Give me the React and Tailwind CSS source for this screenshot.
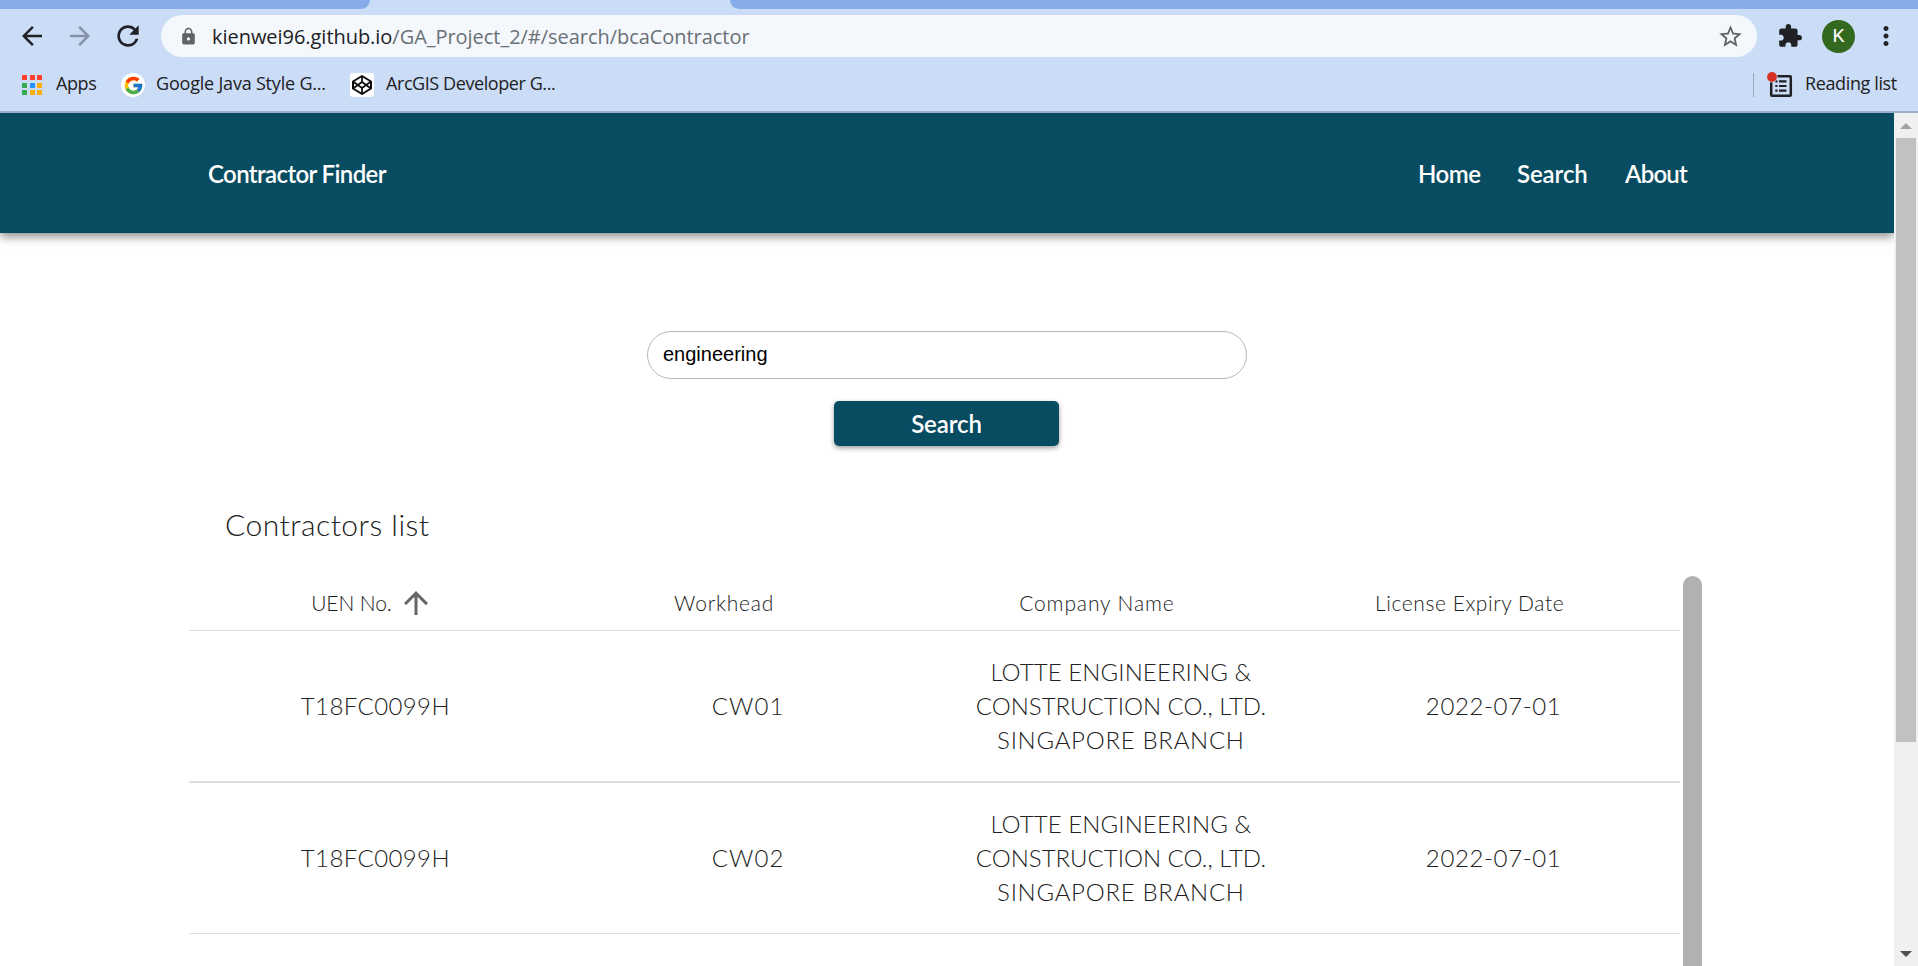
import {
  MdArrowBack,
  MdArrowForward,
  MdArrowUpward,
  MdExtension,
  MdLock,
  MdMoreVert,
  MdRefresh,
  MdStarBorder,
} from "react-icons/md";
import { FcGoogle } from "react-icons/fc";

const APP_TILES = [
  "bg-[#ff4031]", "bg-[#ff4031]", "bg-[#ff4031]",
  "bg-[#34a853]", "bg-[#2492ff]", "bg-[#ffaf0a]",
  "bg-[#34a853]", "bg-[#ffaf0a]", "bg-[#ffaf0a]",
];

const CONTRACTORS = [
  { uen: "T18FC0099H", workhead: "CW01", expiry: "2022-07-01" },
  { uen: "T18FC0099H", workhead: "CW02", expiry: "2022-07-01" },
];

function TabStrip() {
  return (
    <div className="flex h-[9px] bg-[#cbdcf6]">
      <div className="w-[370px] rounded-br-[9px] bg-[#86ace9]" />
      <div className="w-[360px]" />
      <div className="flex-1 rounded-bl-[9px] bg-[#86ace9]" />
    </div>
  );
}

function Toolbar() {
  return (
    <div className="flex h-[54px] items-center text-[#202124]">
      <MdArrowBack size={30} className="ml-[17px] shrink-0" />
      <MdArrowForward size={30} className="ml-[18px] shrink-0 text-[#8490a5]" />
      <MdRefresh size={32} className="ml-[17px] shrink-0" />
      <div className="ml-[17px] flex h-[42px] w-[1596px] items-center rounded-full bg-[#f4f8fd] pr-[13px] pl-[18px]">
        <MdLock size={19} className="text-[#5f6368]" />
        <div className="ml-[14px] flex-1 pt-[2px] text-[20px] leading-[40px] tracking-[-0.04px] whitespace-nowrap">
          kienwei96.github.io
          <span className="text-[#6b7075]">/GA_Project_2/#/search/bcaContractor</span>
        </div>
        <MdStarBorder size={27} className="text-[#5f6368]" />
      </div>
      <MdExtension size={26} className="ml-[20px] shrink-0" />
      <div className="ml-[19px] flex size-[33px] items-center justify-center rounded-full bg-[#33691e] font-[Roboto] text-[19px] text-white">
        K
      </div>
      <MdMoreVert size={30} className="ml-[16px] shrink-0" />
    </div>
  );
}

function CodePenIcon() {
  return (
    <svg viewBox="0 0 24 24" className="size-6" fill="none" stroke="#0b0b0b" strokeWidth="2" strokeLinejoin="round">
      <path d="M12 3 21 8.500v7L12 21 3 15.500v-7Z" />
      <path d="M12 3v5.500M12 15.500V21M3 8.500 12 15 21 8.500M3 15.500 12 9 21 15.500" strokeWidth="1.700" />
    </svg>
  );
}

function ReadingListIcon() {
  return (
    <svg viewBox="0 0 26 26" className="size-[26px]">
      <rect x="4.200" y="4.200" width="19.600" height="19.600" rx="0.800" fill="none" stroke="#202124" strokeWidth="2.500" />
      <path
        d="M8.300 9.300h2.200M12 9.300h7.500M8.300 14h2.200M12 14h7.500M8.300 18.700h2.200M12 18.700h7.500"
        stroke="#202124"
        strokeWidth="2.200"
      />
      <circle cx="5" cy="5" r="5.600" fill="#cbdcf6" />
      <circle cx="5" cy="5" r="4.900" fill="#d93025" />
    </svg>
  );
}

function BookmarksBar() {
  return (
    <div className="flex h-12 items-center border-b-2 border-[#a0aecb] pb-1.5 text-[18px] leading-6 whitespace-nowrap text-[#202124]">
      <div className="ml-[22px] grid grid-cols-3 gap-[2.5px]">
        {APP_TILES.map((color, i) => (
          <span key={i} className={`size-[5px] ${color}`} />
        ))}
      </div>
      <span className="ml-[14px] w-[65px] pb-[4px] tracking-[-0.4px]">Apps</span>
      <span className="flex size-6 items-center justify-center rounded-full bg-white">
        <FcGoogle size={21} />
      </span>
      <span className="ml-[11px] w-[194px] pb-[4px] tracking-[-0.2px]">Google Java Style G...</span>
      <span className="flex size-6 rounded-[3px] bg-white">
        <CodePenIcon />
      </span>
      <span className="ml-[12px] pb-[4px] tracking-[-0.42px]">ArcGIS Developer G...</span>
      <span className="ml-auto h-6 w-px bg-[#9aa8c0]" />
      <span className="ml-[13px]">
        <ReadingListIcon />
      </span>
      <span className="ml-[12px] w-[113px] pb-[4px] tracking-[-0.38px]">Reading list</span>
    </div>
  );
}

function SiteHeader() {
  return (
    <header className="relative flex h-[120px] shrink-0 items-center justify-between bg-[#084c61] pt-[2px] pr-[205px] pl-[208px] text-[24px] font-semibold text-white shadow-[0_3px_10px_rgba(0,0,0,0.5)]">
      <span className="tracking-[-0.62px]">Contractor Finder</span>
      <nav className="flex">
        <a className="w-[99px] tracking-[-0.5px]">Home</a>
        <a className="w-[108px] tracking-[-0.1px]">Search</a>
        <a className="w-[64px] tracking-[-0.8px]">About</a>
      </nav>
    </header>
  );
}

function SearchForm() {
  return (
    <form className="mt-[98px] flex flex-col items-center">
      <div className="flex h-12 w-[600px] items-center rounded-full border border-[#b9b9b9] pb-[2px] pl-[15px] font-['Liberation_Sans',sans-serif] text-[20px] text-black">
        engineering
      </div>
      <button
        type="button"
        className="mt-[22px] mr-px h-[45px] w-[225px] rounded-[5px] bg-[#084c61] text-[24px] font-semibold tracking-[-0.1px] text-white shadow-[0_2px_5px_rgba(0,0,0,0.4)]"
      >
        Search
      </button>
    </form>
  );
}

function HeaderCell({ children, sorted = false }) {
  return (
    <div className="flex items-center justify-center">
      {children}
      <span className="ml-[6px] flex w-[42px] justify-start">
        {sorted && <MdArrowUpward size={36} className="text-[#666666]" />}
      </span>
    </div>
  );
}

function ContractorTable() {
  return (
    <div className="w-[1491px] font-light text-[#212121]">
      <div className="grid h-[55px] grid-cols-4 border-b border-[#dcdcdc] text-[21px]">
        <HeaderCell sorted>
          <span className="tracking-[-0.1px]">UEN No.</span>
        </HeaderCell>
        <HeaderCell>
          <span className="tracking-[0.8px]">Workhead</span>
        </HeaderCell>
        <HeaderCell>
          <span className="tracking-[0.88px]">Company Name</span>
        </HeaderCell>
        <HeaderCell>
          <span className="tracking-[0.57px]">License Expiry Date</span>
        </HeaderCell>
      </div>
      {CONTRACTORS.map((row, i) => (
        <div
          key={row.workhead}
          className={`grid grid-cols-4 items-center border-[#dedede] text-center text-[24px] leading-[34px] ${
            i === 0 ? "h-[152px] border-b-2" : "h-[151px] border-b"
          }`}
        >
          <div className="tracking-[0.4px]">{row.uen}</div>
          <div className="tracking-[1.1px]">{row.workhead}</div>
          <div>
            <div className="tracking-[0.1px]">LOTTE ENGINEERING &amp;</div>
            <div>CONSTRUCTION CO., LTD.</div>
            <div className="tracking-[0.7px]">SINGAPORE BRANCH</div>
          </div>
          <div className="tracking-[0.64px]">{row.expiry}</div>
        </div>
      ))}
    </div>
  );
}

function PageScrollbar() {
  return (
    <div className="flex w-6 shrink-0 flex-col items-center bg-[#f0f0f0]">
      <svg viewBox="0 0 12 6" className="mt-[10px] h-[6px] w-[12px] shrink-0">
        <path d="M6 0 12 6H0Z" fill="#a3a3a3" />
      </svg>
      <div className="mt-[9px] h-[604px] w-5 shrink-0 bg-[#c1c1c1]" />
      <svg viewBox="0 0 12 6" className="mt-auto mb-[9px] h-[6px] w-[12px] shrink-0">
        <path d="M0 0H12L6 6Z" fill="#505050" />
      </svg>
    </div>
  );
}

export default function App() {
  return (
    <div className="flex h-screen flex-col overflow-hidden bg-white">
      <div className="h-[113px] shrink-0 bg-[#cbdcf6] font-['Open_Sans',sans-serif]">
        <TabStrip />
        <Toolbar />
        <div className="h-[2px]" />
        <BookmarksBar />
      </div>
      <div className="flex min-h-0 flex-1">
        <div className="flex min-w-0 flex-1 flex-col overflow-hidden font-[Lato,sans-serif]">
          <SiteHeader />
          <SearchForm />
          <main className="mt-[33px] flex min-h-0 flex-1 flex-col pl-[189px]">
            <h1 className="h-[97px] shrink-0 pl-[36px] text-[30px] leading-[91px] font-light tracking-[0.48px] text-[#212121]">
              Contractors list
            </h1>
            <div className="flex min-h-0 flex-1 gap-[3px]">
              <ContractorTable />
              <div className="w-[19px] rounded-t-[10px] bg-[#b1b1b1]" />
            </div>
          </main>
        </div>
        <PageScrollbar />
      </div>
    </div>
  );
}
